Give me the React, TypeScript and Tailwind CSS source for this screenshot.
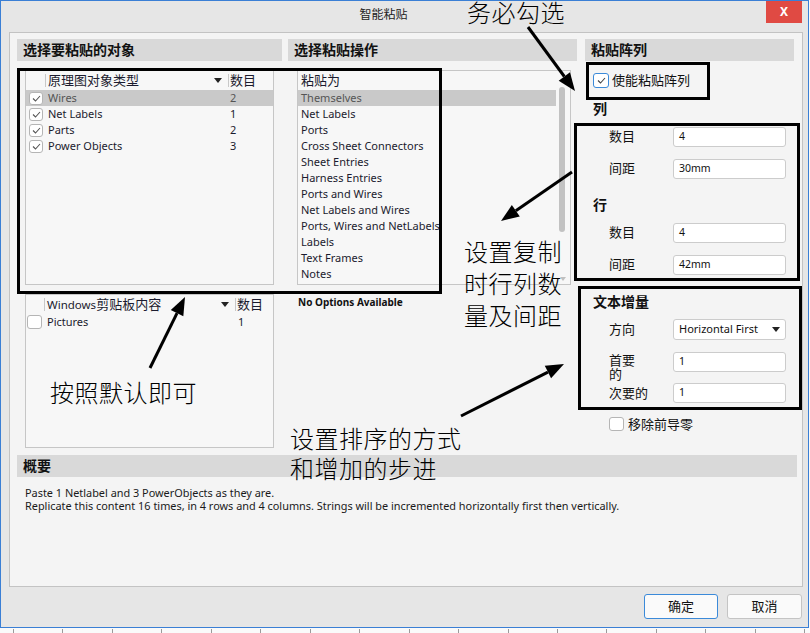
import React from "react";

type Pt = { x0: number; y0: number; x1: number; y1: number };

// Straight callout arrow with a filled head at (x1, y1)
function Arrow({ x0, y0, x1, y1 }: Pt) {
  const dx = x1 - x0;
  const dy = y1 - y0;
  const len = Math.hypot(dx, dy);
  const ux = dx / len;
  const uy = dy / len;
  const L = 18;
  const W = 7;
  const bx = x1 - ux * L;
  const by = y1 - uy * L;
  const nx = -uy;
  const ny = ux;
  return (
    <g>
      <line x1={x0} y1={y0} x2={bx} y2={by} stroke="black" strokeWidth={3} />
      <polygon
        points={`${x1},${y1} ${bx + nx * W},${by + ny * W} ${bx - nx * W},${by - ny * W}`}
        fill="black"
      />
    </g>
  );
}

function CheckMark({ color = "#555" }: { color?: string }) {
  return (
    <svg width="9" height="7" viewBox="0 0 9 7" className="block">
      <polyline points="1,3.5 3.5,6 8,1" fill="none" stroke={color} strokeWidth="1.1" />
    </svg>
  );
}

function SmallCheck({ checked }: { checked: boolean }) {
  return (
    <div className="w-[14px] h-[13px] rounded-[3px] border border-[#b5b5b5] bg-white flex items-center justify-center">
      {checked && <CheckMark />}
    </div>
  );
}

function SectionHeader({ children }: { children: React.ReactNode }) {
  return (
    <div className="h-[22px] bg-[#d9d9d9] pl-[6px] text-[14px] font-bold leading-[22px] text-[#111]">
      {children}
    </div>
  );
}

function Caret() {
  return (
    <div className="w-0 h-0 border-l-[4px] border-r-[4px] border-t-[5px] border-l-transparent border-r-transparent border-t-[#222]" />
  );
}

function Field({ value }: { value: string }) {
  return (
    <div className="w-[113px] h-[20px] flex items-center rounded-[3px] border border-[#cccccc] bg-white pl-[5px] text-[10.5px] text-[#111]">
      {value}
    </div>
  );
}

const objects = [
  { name: "Wires", count: "2", sel: true },
  { name: "Net Labels", count: "1", sel: false },
  { name: "Parts", count: "2", sel: false },
  { name: "Power Objects", count: "3", sel: false },
];

const pasteAs = [
  "Themselves",
  "Net Labels",
  "Ports",
  "Cross Sheet Connectors",
  "Sheet Entries",
  "Harness Entries",
  "Ports and Wires",
  "Net Labels and Wires",
  "Ports, Wires and NetLabels",
  "Labels",
  "Text Frames",
  "Notes",
];

const ticks = Array.from({ length: 17 }, (_, i) => Math.round(13 + i * 49.45));

export default function App() {
  return (
    <div className="relative w-[810px] h-[633px] overflow-hidden bg-[#fafafa] font-['Noto_Sans','Noto_Sans_CJK_SC',sans-serif] text-[#1b1b2e]">
      {/* dialog window */}
      <div className="w-[809px] h-[628px] border border-[#3a7fd5] bg-[#e6e6e6] flex flex-col">
        {/* title bar */}
        <div className="h-[31px] shrink-0 flex items-start">
          <div className="flex-1 text-center text-[12px] leading-[28px] text-[#222]">智能粘贴</div>
          <div className="w-[36px] h-[22px] mr-[6px] bg-[#e04a43] flex items-center justify-center text-white text-[12px] font-bold">
            X
          </div>
        </div>

        {/* main panel */}
        <div className="ml-[8px] w-[794px] h-[555px] shrink-0 border border-[#c3c3c3] bg-[#f4f4f4] pt-[6px] pl-[7px]">
          <div className="flex h-[410px]">
            {/* objects to paste */}
            <div className="w-[265px] flex flex-col">
              <SectionHeader>选择要粘贴的对象</SectionHeader>
              <div className="mt-[9px] ml-[8px] w-[249px] h-[215px] border border-[#c6c6c6] bg-[#f7f7f7]">
                <div className="h-[19px] flex items-center text-[13px] leading-[19px]">
                  <div className="w-[19px]" />
                  <div className="w-px h-[13px] bg-[#c8c8c8]" />
                  <div className="flex-1 flex items-center pl-[2px] pr-[6px]">
                    <span>原理图对象类型</span>
                    <div className="ml-auto">
                      <Caret />
                    </div>
                  </div>
                  <div className="w-px h-[13px] bg-[#c8c8c8]" />
                  <div className="w-[44px] pl-[1px]">数目</div>
                </div>
                {objects.map((o) => (
                  <div
                    key={o.name}
                    className={
                      o.sel
                        ? "h-[16px] flex items-center text-[11px] bg-[#c9c9c9] text-[#555]"
                        : "h-[16px] flex items-center text-[11px]"
                    }
                  >
                    <div className="w-[20px] pl-[3px]">
                      <SmallCheck checked />
                    </div>
                    <div className="flex-1 pl-[2px]">{o.name}</div>
                    <div className="w-[45px] pl-[2px]">{o.count}</div>
                  </div>
                ))}
              </div>

              <div className="mt-[9px] ml-[8px] w-[249px] h-[154px] border border-[#c6c6c6] bg-[#f7f7f7]">
                <div className="h-[19px] flex items-center text-[13px] leading-[19px]">
                  <div className="w-[18px]" />
                  <div className="w-px h-[13px] bg-[#c8c8c8]" />
                  <div className="flex-1 flex items-center pl-[2px] pr-[6px]">
                    <span>
                      <span className="text-[11.5px]">Windows</span>剪贴板内容
                    </span>
                    <div className="ml-auto">
                      <Caret />
                    </div>
                  </div>
                  <div className="w-px h-[13px] bg-[#c8c8c8]" />
                  <div className="w-[37px] pl-[1px]">数目</div>
                </div>
                <div className="h-[16px] flex items-center text-[11px]">
                  <div className="w-[19px] pl-[1px]">
                    <div className="w-[15px] h-[14px] rounded-[3px] border border-[#b5b5b5] bg-white" />
                  </div>
                  <div className="flex-1 pl-[2px]">Pictures</div>
                  <div className="w-[37px] pl-[2px]">1</div>
                </div>
              </div>
            </div>

            {/* paste action */}
            <div className="ml-[6px] w-[289px] flex flex-col">
              <SectionHeader>选择粘贴操作</SectionHeader>
              <div className="mt-[9px] ml-[9px] w-[274px] h-[215px] border border-[#c6c6c6] bg-[#f7f7f7] flex">
                <div className="flex-1">
                  <div className="h-[19px] pl-[3px] text-[13px] leading-[19px]">粘贴为</div>
                  {pasteAs.map((p, i) => (
                    <div
                      key={p}
                      className={
                        i === 0
                          ? "h-[16px] pl-[3px] text-[11px] leading-[16px] bg-[#c9c9c9] text-[#555]"
                          : "h-[16px] pl-[3px] text-[11px] leading-[16px]"
                      }
                    >
                      {p}
                    </div>
                  ))}
                </div>
                <div className="w-[14px] flex flex-col">
                  <div className="mt-[16px] ml-[3px] w-[6px] h-[145px] rounded-[3px] bg-[#c2c2c2]" />
                  <div className="mt-auto mb-[3px] ml-[4px] w-0 h-0 border-l-[3px] border-r-[3px] border-t-[4px] border-l-transparent border-r-transparent border-t-[#c0c0c0]" />
                </div>
              </div>
              <div className="mt-[11px] ml-[10px] text-[10px] font-bold leading-[12px] text-[#111]">
                No Options Available
              </div>
            </div>

            {/* paste array */}
            <div className="ml-[8px] w-[209px] flex flex-col text-[#111]">
              <SectionHeader>粘贴阵列</SectionHeader>
              <div className="mt-[11px] ml-[8px] h-[16px] flex items-center">
                <div className="w-[16px] h-[15px] rounded-[3px] border border-[#3b8ad9] bg-white flex items-center justify-center">
                  <CheckMark color="#444" />
                </div>
                <span className="ml-[3px] text-[13px] leading-[16px]">使能粘贴阵列</span>
              </div>

              <div className="mt-[13px] ml-[8px] h-[16px] text-[14px] font-bold leading-[16px]">列</div>
              <div className="mt-[10px] ml-[24px] h-[20px] flex items-center">
                <div className="w-[64px] text-[13px]">数目</div>
                <Field value="4" />
              </div>
              <div className="mt-[12px] ml-[24px] h-[20px] flex items-center">
                <div className="w-[64px] text-[13px]">间距</div>
                <Field value="30mm" />
              </div>

              <div className="mt-[18px] ml-[8px] h-[16px] text-[14px] font-bold leading-[16px]">行</div>
              <div className="mt-[10px] ml-[24px] h-[20px] flex items-center">
                <div className="w-[64px] text-[13px]">数目</div>
                <Field value="4" />
              </div>
              <div className="mt-[12px] ml-[24px] h-[20px] flex items-center">
                <div className="w-[64px] text-[13px]">间距</div>
                <Field value="42mm" />
              </div>

              <div className="mt-[19px] ml-[8px] h-[16px] text-[14px] font-bold leading-[16px]">文本增量</div>
              <div className="mt-[9px] ml-[24px] h-[21px] flex items-center">
                <div className="w-[64px] text-[13px]">方向</div>
                <div className="w-[113px] h-[21px] flex items-center justify-between rounded-[3px] border border-[#cccccc] bg-white pl-[5px] pr-[5px] text-[11px]">
                  <span>Horizontal First</span>
                  <Caret />
                </div>
              </div>
              <div className="mt-[12px] ml-[24px] h-[20px] flex items-start">
                <div className="w-[64px] h-[20px] pt-[1px] text-[13px] leading-[14px]">
                  首要
                  <br />的
                </div>
                <Field value="1" />
              </div>
              <div className="mt-[11px] ml-[24px] h-[20px] flex items-center">
                <div className="w-[64px] text-[13px] leading-[14px]">次要的</div>
                <Field value="1" />
              </div>
              <div className="mt-[14px] ml-[24px] h-[14px] flex items-center">
                <div className="w-[15px] h-[14px] rounded-[3px] border border-[#b5b5b5] bg-white" />
                <span className="ml-[4px] text-[13px] leading-[14px]">移除前导零</span>
              </div>
            </div>
          </div>

          {/* summary */}
          <div className="mt-[6px] w-[780px]">
            <SectionHeader>概要</SectionHeader>
            <div className="mt-[9px] pl-[8px] text-[10.9px] leading-[13px] text-[#1a1a1a]">
              <div>Paste 1 Netlabel and 3 PowerObjects as they are.</div>
              <div>
                Replicate this content 16 times, in 4 rows and 4 columns. Strings will be incremented
                horizontally first then vertically.
              </div>
            </div>
          </div>
        </div>

        {/* dialog buttons */}
        <div className="mt-[7px] mr-[6px] flex justify-end gap-[9px]">
          <button className="w-[74px] h-[25px] rounded-[3px] border border-[#3b8ad9] bg-[#fafafa] text-[13px] text-[#111]">
            确定
          </button>
          <button className="w-[75px] h-[25px] rounded-[3px] border border-[#c4c4c4] bg-[#fafafa] text-[13px] text-[#111]">
            取消
          </button>
        </div>
      </div>

      {/* ruler strip under the window */}
      <svg width="810" height="5" className="block">
        {ticks.map((x) => (
          <line key={x} x1={x + 0.5} y1={1} x2={x + 0.5} y2={5} stroke="#9a9a9a" strokeWidth={1} />
        ))}
      </svg>

      {/* callout boxes */}
      <div className="absolute left-[17px] top-[68px] w-[425px] h-[226px] border-[3px] border-black" />
      <div className="absolute left-[586px] top-[62px] w-[124px] h-[38px] border-[3px] border-black" />
      <div className="absolute left-[574px] top-[123px] w-[226px] h-[158px] border-[3px] border-black" />
      <div className="absolute left-[578px] top-[286px] w-[224px] h-[124px] border-[3px] border-black" />

      {/* callout arrows */}
      <svg width="810" height="633" className="absolute left-0 top-0 pointer-events-none">
        <Arrow x0={528} y0={27} x1={575} y1={91} />
        <Arrow x0={572} y0={172} x1={501} y1={221} />
        <Arrow x0={150} y0={368} x1={185} y1={297} />
        <Arrow x0={461} y0={416} x1={564} y1={364} />
      </svg>

      {/* callout notes */}
      <div className="absolute left-[467px] top-[0px] text-[24px] font-light leading-[26px] tracking-[0.5px] text-black whitespace-nowrap">
        务必勾选
      </div>
      <div className="absolute left-[464px] top-[236px] text-[24px] font-light leading-[32px] tracking-[0.5px] text-black whitespace-nowrap">
        设置复制
        <br />
        时行列数
        <br />
        量及间距
      </div>
      <div className="absolute left-[50px] top-[381px] text-[24px] font-light leading-[24px] tracking-[0.5px] text-black whitespace-nowrap">
        按照默认即可
      </div>
      <div className="absolute left-[290px] top-[424px] text-[24px] font-light leading-[30px] tracking-[0.5px] text-black whitespace-nowrap">
        设置排序的方式
        <br />
        和增加的步进
      </div>
    </div>
  );
}
